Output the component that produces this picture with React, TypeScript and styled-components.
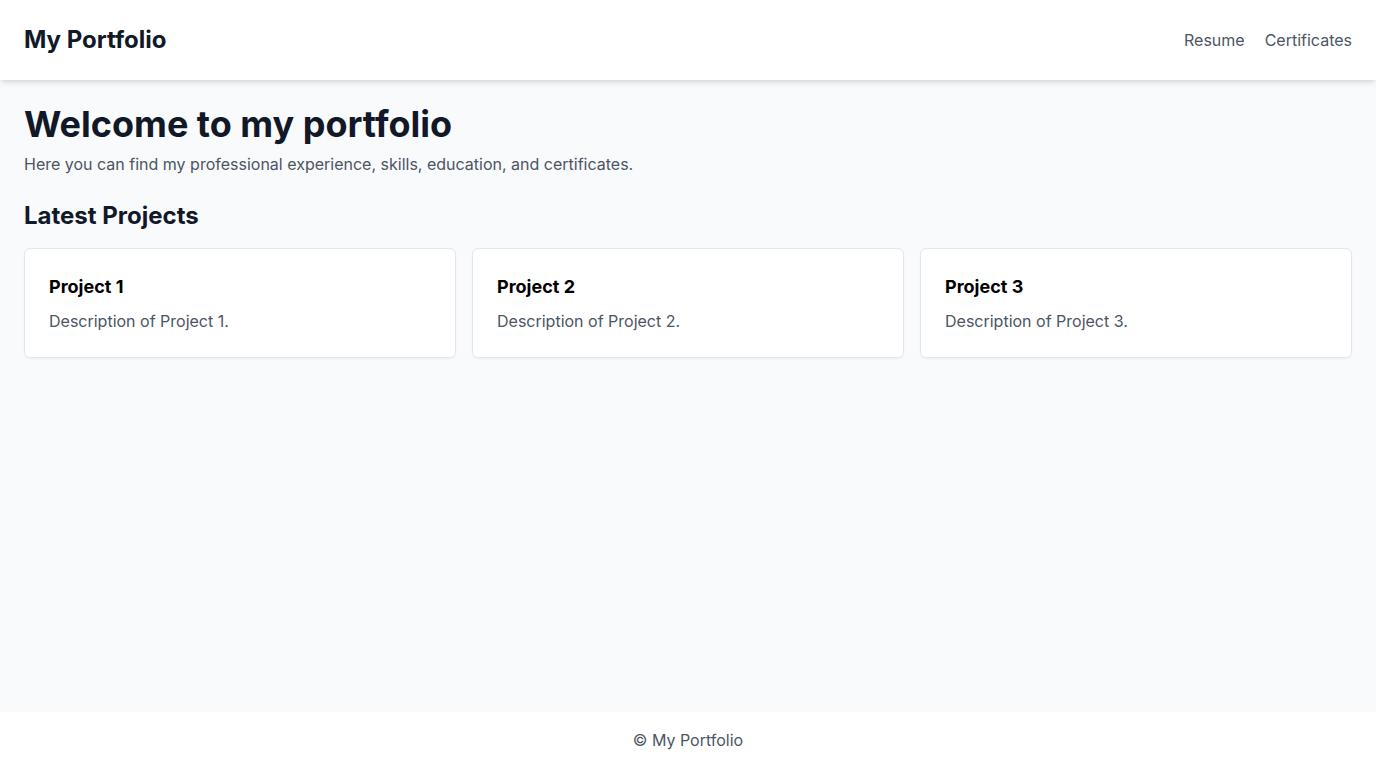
import React from "react";
import styled, { createGlobalStyle } from "styled-components";

const Global = createGlobalStyle`
  * { box-sizing: border-box; }
  html, body { margin: 0; padding: 0; }
  body {
    font-family: Inter, "Noto Sans", "Liberation Sans", sans-serif;
    background: #f9fafb;
    color: #111827;
  }
`;

const Page = styled.div`
  min-height: 100vh;
  display: flex;
  flex-direction: column;
`;

const Header = styled.header`
  height: 80px;
  background: #ffffff;
  display: flex;
  align-items: center;
  justify-content: space-between;
  padding: 0 24px;
  box-shadow: 0 4px 6px -1px rgba(0, 0, 0, 0.1), 0 2px 4px -2px rgba(0, 0, 0, 0.1);
  position: relative;
  z-index: 1;
`;

const Logo = styled.div`
  font-size: 24px;
  line-height: 32px;
  font-weight: 700;
  color: #111827;
`;

const Nav = styled.nav`
  display: flex;
  gap: 20px;
`;

const NavLink = styled.a`
  font-size: 16px;
  line-height: 24px;
  color: #4b5563;
  text-decoration: none;
`;

const Main = styled.main`
  flex: 1;
  padding: 24px;
`;

const Title = styled.h1`
  margin: 0;
  font-size: 36px;
  line-height: 40px;
  font-weight: 700;
  color: #111827;
`;

const Lead = styled.p`
  margin: 8px 0 0;
  font-size: 16px;
  line-height: 24px;
  color: #4b5563;
`;

const SectionTitle = styled.h2`
  margin: 24px 0 0;
  font-size: 24px;
  line-height: 32px;
  font-weight: 700;
  color: #111827;
`;

const Grid = styled.div`
  margin-top: 16px;
  display: grid;
  grid-template-columns: repeat(3, 1fr);
  gap: 16px;
`;

const Card = styled.div`
  background: #ffffff;
  border: 1px solid #e5e7eb;
  border-radius: 6px;
  padding: 24px;
  box-shadow: 0 1px 2px 0 rgba(0, 0, 0, 0.05);
`;

const CardTitle = styled.h3`
  margin: 0;
  font-size: 18px;
  line-height: 28px;
  font-weight: 700;
  color: #000000;
`;

const CardText = styled.p`
  margin: 8px 0 0;
  font-size: 16px;
  line-height: 24px;
  color: #4b5563;
`;

const Footer = styled.footer`
  height: 56px;
  background: #ffffff;
  display: flex;
  align-items: center;
  justify-content: center;
  font-size: 16px;
  line-height: 24px;
  color: #4b5563;
`;

const projects = [1, 2, 3];

export default function App() {
  return (
    <>
      <Global />
      <Page>
        <Header>
          <Logo>My Portfolio</Logo>
          <Nav>
            <NavLink href="#">Resume</NavLink>
            <NavLink href="#">Certificates</NavLink>
          </Nav>
        </Header>
        <Main>
          <Title>Welcome to my portfolio</Title>
          <Lead>Here you can find my professional experience, skills, education, and certificates.</Lead>
          <SectionTitle>Latest Projects</SectionTitle>
          <Grid>
            {projects.map((n) => (
              <Card key={n}>
                <CardTitle>Project {n}</CardTitle>
                <CardText>Description of Project {n}.</CardText>
              </Card>
            ))}
          </Grid>
        </Main>
        <Footer>© My Portfolio</Footer>
      </Page>
    </>
  );
}
